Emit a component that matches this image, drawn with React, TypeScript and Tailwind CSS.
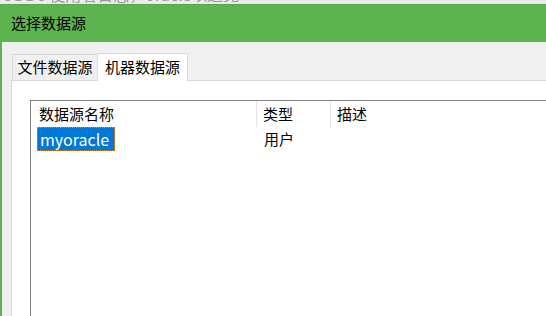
export default function App() {
  const font = { fontFamily: '"Noto Sans CJK SC", "Noto Sans", sans-serif' };
  return (
    <div className="w-[546px] h-[316px] overflow-hidden flex flex-col bg-white text-black" style={font}>
      {/* desktop text peeking out above the window */}
      <div className="h-[4px] overflow-hidden bg-[#ececec] shrink-0">
        <div className="-mt-[15px] pl-[2px] text-[16px] leading-[18px] text-[#9a9a9a] whitespace-nowrap">
          ODBC 使用者日志，oracle以避免
        </div>
      </div>

      <div className="flex-1 flex flex-col border-l-2 border-[#5cb34f] min-h-0">
        <div className="h-[38px] shrink-0 bg-[#5db350] border-t border-[#4fab42] flex items-center pl-[9px] text-[15px]">
          选择数据源
        </div>

        <div className="flex-1 flex flex-col bg-[#f0f0f0] pt-[10px] pl-[9px] min-h-0">
          <div className="flex items-end h-[28px] pl-[1px] shrink-0">
            <div className="h-[26px] w-[86px] border border-b-0 border-[#d9d9d9] flex items-center justify-center text-[15px]">
              文件数据源
            </div>
            <div className="relative z-10 -mb-px h-[28px] w-[91px] -ml-px bg-white border border-b-0 border-[#d9d9d9] flex items-center justify-center text-[15px]">
              机器数据源
            </div>
          </div>

          <div className="flex-1 flex flex-col bg-white border-l border-t border-[#d9d9d9] pt-[19px] pl-[18px] min-h-0">
            <div className="flex-1 border-l border-t border-[#828282] flex flex-col text-[15px]">
              <div className="flex h-[26px] shrink-0">
                <div className="w-[226px] pl-[8px] flex items-center border-r border-[#e5e5e5]">数据源名称</div>
                <div className="w-[74px] pl-[6px] flex items-center border-r border-[#e5e5e5]">类型</div>
                <div className="flex-1 pl-[6px] flex items-center">描述</div>
              </div>
              <div className="flex h-[24px] shrink-0">
                <div className="w-[226px] pl-[6px] flex items-stretch">
                  <span className="pl-[3px] pr-[6px] text-[16px] bg-[#0078d7] text-white flex items-center outline outline-1 outline-dotted outline-[#d08a3a] -outline-offset-1">
                    myoracle
                  </span>
                </div>
                <div className="w-[74px] pl-[7px] flex items-center">用户</div>
                <div className="flex-1"></div>
              </div>
            </div>
          </div>
        </div>
      </div>
    </div>
  );
}
